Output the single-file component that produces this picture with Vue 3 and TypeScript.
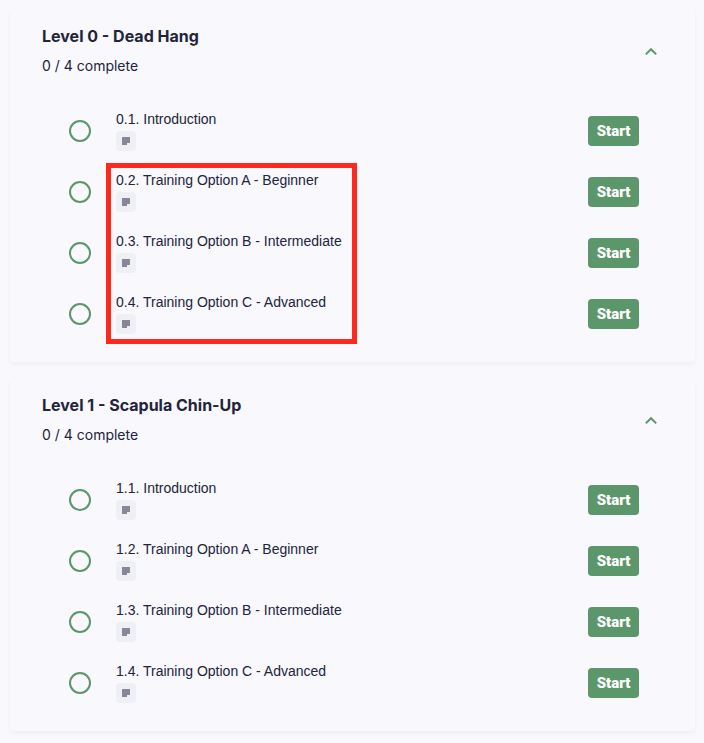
<script setup lang="ts">
import { ref } from 'vue'

interface Lesson {
  id: string
  title: string
  done: boolean
}
interface Level {
  id: string
  title: string
  open: boolean
  highlighted: boolean
  lessons: Lesson[]
}

const names: string[] = [
  'Introduction',
  'Training Option A - Beginner',
  'Training Option B - Intermediate',
  'Training Option C - Advanced',
]

function makeLevel(index: number, name: string, highlighted: boolean): Level {
  return {
    id: `level-${index}`,
    title: `Level ${index} - ${name}`,
    open: true,
    highlighted,
    lessons: names.map((n, i) => ({
      id: `lesson-${index}-${i + 1}`,
      title: `${index}.${i + 1}. ${n}`,
      done: false,
    })),
  }
}

const levels = ref<Level[]>([
  makeLevel(0, 'Dead Hang', true),
  makeLevel(1, 'Scapula Chin-Up', false),
])

function completed(level: Level): number {
  return level.lessons.filter((l) => l.done).length
}
</script>

<template>
  <main class="page">
    <section v-for="level in levels" :key="level.id" class="card">
      <header class="head">
        <div class="heading">
          <h2 class="title">{{ level.title }}</h2>
          <p class="progress">{{ completed(level) }} / {{ level.lessons.length }} complete</p>
        </div>
        <button
          class="toggle"
          type="button"
          aria-label="Toggle level"
          :aria-expanded="level.open"
          :aria-controls="level.id"
          @click="level.open = !level.open"
        >
          <svg :class="{ closed: !level.open }" width="14" height="12" viewBox="0 0 14 12" aria-hidden="true">
            <path d="M1.8 10.4 7 5.2l5.2 5.2" fill="none" stroke="currentColor" stroke-width="2" />
          </svg>
        </button>
      </header>
      <ul v-show="level.open" :id="level.id" class="lessons">
        <li v-for="lesson in level.lessons" :key="lesson.id" class="lesson">
          <input :id="lesson.id" v-model="lesson.done" class="check" type="checkbox" />
          <div class="info">
            <label class="name" :for="lesson.id">{{ lesson.title }}</label>
            <span class="kind">
              <svg width="8" height="8" viewBox="0 0 8 8" aria-hidden="true">
                <path d="M0 0h8v6H5v2H0z" fill="#878797" />
              </svg>
            </span>
          </div>
          <button class="start" type="button">Start</button>
        </li>
        <li v-if="level.highlighted" class="highlight" aria-hidden="true"></li>
      </ul>
    </section>
  </main>
</template>

<style>
body {
  background: #f8f8fd;
}
</style>

<style scoped>
.page {
  display: flex;
  flex-direction: column;
  gap: 17px;
  padding: 10px 9px 12px 10px;
  color: #22243a;
  font-family: Inter, "Liberation Sans", sans-serif;
  font-size: 14px;
}
.card {
  padding: 14px 32px 18px;
  border-radius: 4px;
  background: #f8f8fd;
  box-shadow: 0 2px 4px rgba(34, 36, 58, 0.05);
}
.head {
  display: flex;
  align-items: center;
  justify-content: space-between;
  padding-bottom: 24px;
}
.title {
  margin: 0;
  font-size: 16px;
  line-height: 24px;
  font-weight: 700;
}
.progress {
  margin: 8px 0 0;
  line-height: 20px;
}
.toggle {
  display: flex;
  padding: 5px;
  border: 0;
  background: none;
  color: #5c966b;
  cursor: pointer;
}
.closed {
  transform: rotate(180deg);
}
.lessons {
  position: relative;
  margin: 0;
  padding: 0 24px 0 27px;
  list-style: none;
}
.lesson {
  display: flex;
  align-items: center;
  height: 61px;
}
.check {
  appearance: none;
  flex: none;
  width: 22px;
  height: 22px;
  margin: 0 25px 0 0;
  border: 2px solid #5c966b;
  border-radius: 50%;
  cursor: pointer;
}
.check:checked {
  background: #5c966b;
}
.info {
  display: flex;
  flex: 1;
  flex-direction: column;
  align-items: flex-start;
  gap: 2px;
  padding-bottom: 2px;
}
.name {
  font-family: "Liberation Sans", Arial, sans-serif;
  line-height: 20px;
}
.kind {
  display: flex;
  align-items: center;
  justify-content: center;
  width: 20px;
  height: 20px;
  border-radius: 4px;
  background: #eff0f4;
}
.start {
  min-width: 51px;
  height: 30px;
  padding: 0 8px;
  border: 0;
  border-radius: 4px;
  background: #5c966b;
  color: #fff;
  font-family: Roboto, "Liberation Sans", sans-serif;
  font-size: 15px;
  font-weight: 900;
  cursor: pointer;
}
.highlight {
  position: absolute;
  top: 63px;
  bottom: 0;
  left: 64px;
  width: 251px;
  box-sizing: border-box;
  border: 5px solid #ff281c;
  pointer-events: none;
}
</style>
